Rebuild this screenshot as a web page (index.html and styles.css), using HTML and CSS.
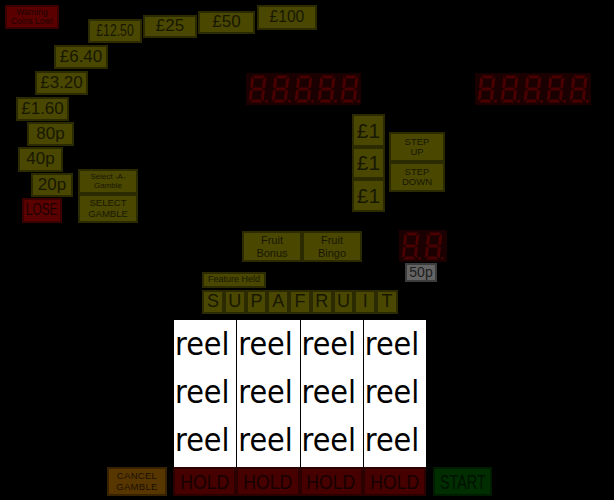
FILE: index.html
```html
<!DOCTYPE html>
<html lang="en">
<head>
  <meta charset="UTF-8">
  <title>Supafruit</title>
  <link rel="stylesheet" href="styles.css">
</head>
<body>
<div class="machine">

  <svg class="defs" width="0" height="0">
    <defs>
      <g id="digit" transform="translate(3,0) skewX(-6)">
        <polygon points="2,0.5 14,0.5 12,3.5 4,3.5"/>
        <polygon points="15.5,1.5 15.5,12.5 14,13.5 12.5,12 12.5,4.5"/>
        <polygon points="15.5,15.5 15.5,26.5 12.5,23.5 12.5,16 14,14.5"/>
        <polygon points="4,24.5 12,24.5 14,27.5 2,27.5"/>
        <polygon points="0.5,15.5 2,14.5 3.5,16 3.5,23.5 0.5,26.5"/>
        <polygon points="0.5,1.5 3.5,4.5 3.5,12 2,13.5 0.5,12.5"/>
        <polygon points="2.5,14 4,12.5 12,12.5 13.5,14 12,15.5 4,15.5"/>
        <rect x="17" y="25" width="2.5" height="2.5"/>
      </g>
    </defs>
  </svg>

  <!-- gamble ladder -->
  <div class="btn red warn">Warning<br>Coins Low!</div>
  <div class="btn step p1250"><span>£12.50</span></div>
  <div class="btn step p25"><span>£25</span></div>
  <div class="btn step p50"><span>£50</span></div>
  <div class="btn step p100"><span>£100</span></div>
  <div class="btn step p640"><span>£6.40</span></div>
  <div class="btn step p320"><span>£3.20</span></div>
  <div class="btn step p160"><span>£1.60</span></div>
  <div class="btn step p80"><span>80p</span></div>
  <div class="btn step p40"><span>40p</span></div>
  <div class="btn step p20"><span>20p</span></div>
  <div class="btn red lose"><span>LOSE</span></div>
  <div class="btn small sag">Select -A-<br>Gamble</div>
  <div class="btn small selg">SELECT<br>GAMBLE</div>

  <!-- displays -->
  <svg class="display credits" width="115" height="32" viewBox="0 0 115 32">
    <rect width="115" height="32"/>
    <use href="#digit" x="2" y="2"/>
    <use href="#digit" x="25" y="2"/>
    <use href="#digit" x="48" y="2"/>
    <use href="#digit" x="71" y="2"/>
    <use href="#digit" x="94" y="2"/>
  </svg>
  <svg class="display bank" width="116" height="32" viewBox="0 0 116 32">
    <rect width="116" height="32"/>
    <use href="#digit" x="2" y="2"/>
    <use href="#digit" x="25" y="2"/>
    <use href="#digit" x="48" y="2"/>
    <use href="#digit" x="71" y="2"/>
    <use href="#digit" x="94" y="2"/>
  </svg>
  <svg class="display stake" width="48" height="32" viewBox="0 0 48 32">
    <rect width="48" height="32"/>
    <use href="#digit" x="2" y="2"/>
    <use href="#digit" x="25" y="2"/>
  </svg>
  <div class="btn grey coin">50p</div>

  <!-- stake / step -->
  <div class="pounds">
    <div class="btn big">£1</div>
    <div class="btn big">£1</div>
    <div class="btn big">£1</div>
  </div>
  <div class="steps">
    <div class="btn small">STEP<br>UP</div>
    <div class="btn small">STEP<br>DOWN</div>
  </div>

  <div class="fruit">
    <div class="btn mid">Fruit<br>Bonus</div>
    <div class="btn mid">Fruit<br>Bingo</div>
  </div>

  <div class="btn tiny held">Feature Held</div>
  <div class="letters">
    <div class="btn">S</div>
    <div class="btn">U</div>
    <div class="btn">P</div>
    <div class="btn">A</div>
    <div class="btn">F</div>
    <div class="btn">R</div>
    <div class="btn">U</div>
    <div class="btn">I</div>
    <div class="btn">T</div>
  </div>

  <!-- reels -->
  <div class="reels">
    <div class="reel"><div>reel</div><div>reel</div><div>reel</div></div>
    <div class="reel"><div>reel</div><div>reel</div><div>reel</div></div>
    <div class="reel"><div>reel</div><div>reel</div><div>reel</div></div>
    <div class="reel"><div>reel</div><div>reel</div><div>reel</div></div>
  </div>

  <div class="controls">
    <div class="btn cancel">CANCEL<br>GAMBLE</div>
    <div class="holds">
      <div class="btn hold"><span>HOLD</span></div>
      <div class="btn hold"><span>HOLD</span></div>
      <div class="btn hold"><span>HOLD</span></div>
      <div class="btn hold"><span>HOLD</span></div>
    </div>
    <div class="btn start"><span>START</span></div>
  </div>

</div>
</body>
</html>
```

FILE: styles.css
```css
body {
  margin: 0;
  background-color: #000;
  font-family: "Liberation Sans", Arial, sans-serif;
}

.machine {
  position: relative;
  width: 614px;
  height: 500px;
  overflow: hidden;
}

.defs {
  position: absolute;
}

.btn {
  box-sizing: border-box;
  display: flex;
  align-items: center;
  justify-content: center;
  text-align: center;
  background-color: #4a4700;
  border: 2px solid #2b2a00;
  color: #181800;
  line-height: 1.1;
}

.btn span {
  display: inline-block;
  white-space: nowrap;
}

/* things placed on the machine artwork */
.warn, .step, .lose, .sag, .selg, .display, .coin,
.pounds, .steps, .fruit, .held, .letters, .reels, .controls {
  position: absolute;
}

.red {
  background-color: #5a0000;
  border-color: #3b0000;
  color: #1c0000;
}

.warn { left: 5px; top: 5px; width: 54px; height: 24px; font-size: 8.5px; }

.step { font-size: 17px; }
.p1250 { left: 88px; top: 19px; width: 54px; height: 24px; }
.p1250 span { transform: scaleX(.72); }
.p25 { left: 143px; top: 15px; width: 54px; height: 23px; }
.p50 { left: 198px; top: 11px; width: 57px; height: 23px; }
.p100 { left: 257px; top: 5px; width: 60px; height: 25px; }
.p100 span { transform: scaleX(.92); }
.p640 { left: 54px; top: 45px; width: 54px; height: 24px; }
.p320 { left: 35px; top: 71px; width: 53px; height: 24px; }
.p160 { left: 16px; top: 97px; width: 53px; height: 24px; }
.p80 { left: 27px; top: 122px; width: 47px; height: 24px; }
.p40 { left: 18px; top: 147px; width: 45px; height: 25px; }
.p20 { left: 31px; top: 173px; width: 42px; height: 24px; }

.lose { left: 22px; top: 198px; width: 40px; height: 25px; font-size: 17px; }
.lose span { transform: scaleX(.7); }

.small { font-size: 9.5px; }
.sag { left: 78px; top: 169px; width: 60px; height: 25px; font-size: 8px; }
.selg { left: 78px; top: 194px; width: 60px; height: 29px; }

.display rect { fill: #1a0000; }
.display use { fill: #4a0000; }
.credits { left: 246px; top: 73px; }
.bank { left: 475px; top: 73px; }
.stake { left: 399px; top: 230px; }

.grey {
  background-color: #646464;
  border-color: #3c3c3c;
  color: #1c1c1c;
}
.coin { left: 405px; top: 263px; width: 32px; height: 19px; font-size: 14px; }

.pounds {
  left: 352px;
  top: 114px;
  display: flex;
  flex-direction: column;
}
.big { width: 33px; height: 32.5px; font-size: 21px; }

.steps {
  left: 389px;
  top: 132px;
  display: flex;
  flex-direction: column;
}
.steps .btn { width: 56px; height: 30px; }

.fruit {
  left: 242px;
  top: 231px;
  display: flex;
}
.mid { width: 60px; height: 31px; font-size: 11px; }

.held {
  left: 202px;
  top: 272px;
  width: 64px;
  height: 16px;
  font-size: 9px;
  justify-content: flex-start;
  padding-left: 4px;
}

.letters {
  left: 202px;
  top: 290px;
  width: 196px;
  height: 23px;
  display: grid;
  grid-template-columns: repeat(9, 1fr);
}
.letters .btn { font-size: 18px; }

.reels {
  left: 174px;
  top: 320px;
  width: 252px;
  height: 147px;
  display: grid;
  grid-template-columns: repeat(4, 1fr);
  gap: 1px;
  background-color: #000;
}

.reel {
  background-color: #fff;
  color: #000;
  font-family: "DejaVu Sans Condensed", "DejaVu Sans", sans-serif;
  font-stretch: condensed;
  font-size: 32px;
  line-height: 48px;
  padding-left: 1px;
  overflow: hidden;
}

.controls {
  left: 107px;
  top: 467px;
  height: 29px;
  display: flex;
}

.cancel {
  width: 60px;
  font-size: 9.5px;
  letter-spacing: .3px;
  background-color: #583600;
  border-color: #382300;
  color: #1a1000;
  margin-right: 6px;
}

.holds {
  display: flex;
  width: 253px;
}

.hold {
  flex: 1;
  font-size: 20px;
  background-color: #460000;
  border-color: #2a0000;
  color: #160000;
}
.hold span { transform: scaleX(.88); }

.start {
  width: 59px;
  margin-left: 7px;
  font-size: 20px;
  background-color: #002e00;
  border-color: #001c00;
  color: #001000;
}
.start span { transform: scaleX(.72); }
```
